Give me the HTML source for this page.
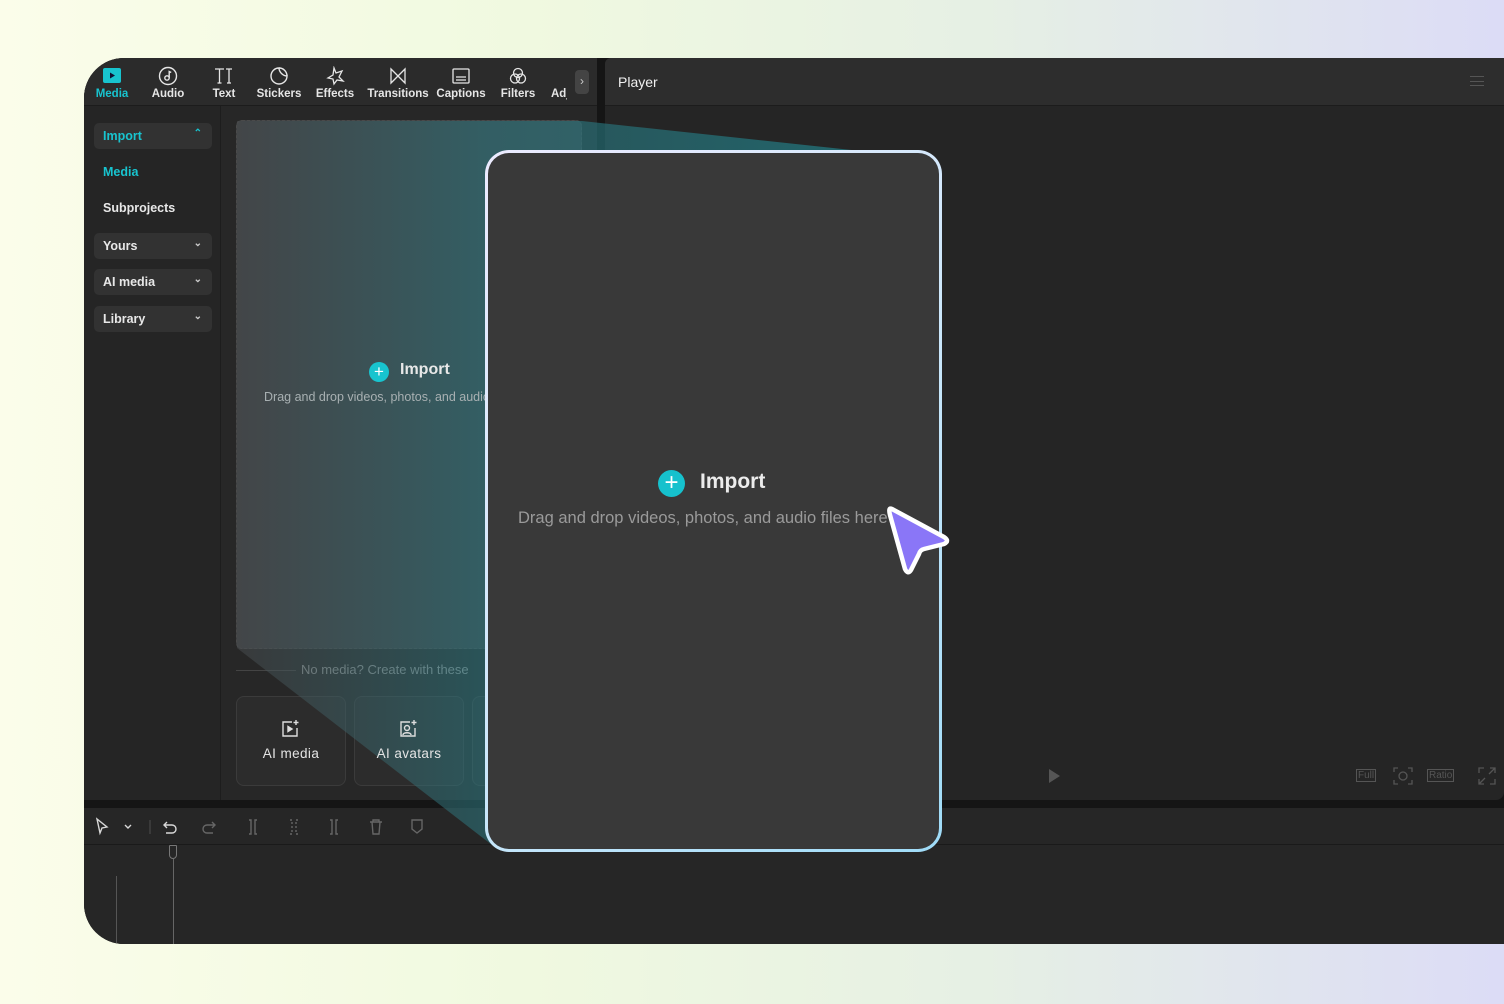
<!DOCTYPE html>
<html><head><style>
*{margin:0;padding:0;box-sizing:border-box}
body{width:1504px;height:1004px;overflow:hidden;position:relative;font-family:"Liberation Sans",sans-serif;background:linear-gradient(90deg,#fbfdea 0%,#f0f9e0 35%,#e6f0e4 65%,#dcdcf6 100%)}
.abs{position:absolute}
.app{left:84px;top:58px;width:1420px;height:886px;border-radius:40px 0 0 40px;overflow:hidden;background:#151515}
.tab{position:absolute;top:0;text-align:center;color:#e6e6e6;font-size:11.5px;font-weight:bold;width:56px}
.tab svg{display:block;margin:8px auto 2px;width:20px;height:20px}
.side{position:absolute;left:10px;width:118px;height:26px;border-radius:5px;background:#323232;color:#e8e8e8;font-size:12.5px;font-weight:bold;padding:6px 9px}
.side i{position:absolute;right:10px;top:5px;font-style:normal;font-size:10px;color:#ccc}
</style></head><body>
<div class="abs app">
  <div class="abs" style="left:0;top:0;width:513px;height:742px;background:#272727;border-radius:0 0 8px 8px"></div>
  <div class="abs" style="left:0;top:0;width:513px;height:48px;background:#2b2b2b;border-bottom:1px solid #1c1c1c"></div>
  <div class="abs" style="left:0;top:48px;width:137px;height:694px;background:#252525;border-right:1px solid #1d1d1d"></div>
  <div class="tab" style="left:0;color:#18c4cf"><svg viewBox="0 0 20 20"><rect x="1" y="2" width="18" height="15" rx="2" fill="#18c4cf"/><path d="M8 6.5l5 3-5 3z" fill="#113"/></svg>Media</div>
  <div class="tab" style="left:56px"><svg viewBox="0 0 20 20" fill="none" stroke="#e6e6e6" stroke-width="1.4"><circle cx="10" cy="10" r="8.5"/><circle cx="9" cy="12" r="2.2"/><path d="M11.2 12V5.5l2 1"/></svg>Audio</div>
  <div class="tab" style="left:112px"><svg viewBox="0 0 20 20" fill="none" stroke="#e6e6e6" stroke-width="1.3"><path d="M1 3h9M5.5 3v14M3.5 17h4M12 3h6M15 3v14M13 17h4"/></svg>Text</div>
  <div class="tab" style="left:167px"><svg viewBox="0 0 20 20" fill="none" stroke="#e6e6e6" stroke-width="1.4"><path d="M18 10A8 8 0 1 1 10 2c0 4 4 8 8 8z"/><path d="M10 2a8 8 0 0 1 8 8"/></svg>Stickers</div>
  <div class="tab" style="left:223px"><svg viewBox="0 0 20 20" fill="none" stroke="#e6e6e6" stroke-width="1.3"><path d="M9 2l2 5 6-2-3 6 4 4-6-1-3 4-1-5-5-1 5-3z"/></svg>Effects</div>
  <div class="tab" style="left:283px;width:62px"><svg viewBox="0 0 20 20" fill="none" stroke="#e6e6e6" stroke-width="1.3"><path d="M3 3v14l14-14v14z"/></svg>Transitions</div>
  <div class="tab" style="left:348px;width:58px"><svg viewBox="0 0 20 20" fill="none" stroke="#e6e6e6" stroke-width="1.3"><rect x="2" y="3" width="16" height="14" rx="1"/><path d="M5 11h10M5 14h10"/></svg>Captions</div>
  <div class="tab" style="left:406px"><svg viewBox="0 0 20 20" fill="none" stroke="#e6e6e6" stroke-width="1.3"><circle cx="10" cy="7" r="4.5"/><circle cx="7" cy="12.5" r="4.5"/><circle cx="13" cy="12.5" r="4.5"/></svg>Filters</div>
  <div class="tab" style="left:467px;width:16px;overflow:hidden;text-align:left"><svg viewBox="0 0 20 20"></svg>Adj</div>
  <div class="abs" style="left:491px;top:12px;width:14px;height:24px;border-radius:4px;background:#444;color:#ccc;font-size:12px;text-align:center;line-height:23px">›</div>
  <div class="side" style="top:65px;color:#18c4cf">Import<i style="color:#18c4cf">⌃</i></div>
  <div class="abs" style="left:19px;top:107px;color:#18c4cf;font-size:12.5px;font-weight:bold">Media</div>
  <div class="abs" style="left:19px;top:143px;color:#e8e8e8;font-size:12.5px;font-weight:bold">Subprojects</div>
  <div class="side" style="top:175px">Yours<i>⌄</i></div>
  <div class="side" style="top:211px">AI media<i>⌄</i></div>
  <div class="side" style="top:248px">Library<i>⌄</i></div>
  <div class="abs" style="left:152px;top:62px;width:346px;height:529px;border:1px dashed #4a4a4a;border-radius:6px;background:#3c3e40"></div>
  <div class="abs" style="left:152px;top:612px;width:60px;height:1px;background:#444"></div>
  <div class="abs" style="left:217px;top:604px;color:#9a9a9a;font-size:13px">No media? Create with these</div>
  <div class="abs" style="left:152px;top:638px;width:110px;height:90px;border:1px solid #3b3b3b;border-radius:8px;background:#2c2c2c"></div>
  <div class="abs" style="left:270px;top:638px;width:110px;height:90px;border:1px solid #3b3b3b;border-radius:8px;background:#2c2c2c"></div>
  <div class="abs" style="left:388px;top:638px;width:30px;height:90px;border:1px solid #3b3b3b;border-radius:8px;background:#2c2c2c"></div>
  <div class="abs" style="left:521px;top:0;width:899px;height:742px;background:#252525;border-radius:6px 0 8px 8px"></div>
  <div class="abs" style="left:521px;top:0;width:899px;height:48px;background:#2d2d2d;border-bottom:1px solid #1c1c1c;border-radius:6px 0 0 0"></div>
  <div class="abs" style="left:534px;top:16px;color:#f0f0f0;font-size:14px">Player</div>
  <div class="abs" style="left:1386px;top:18px;width:14px;height:10px;border-top:1px solid #555;border-bottom:1px solid #555"></div>
  <div class="abs" style="left:1386px;top:23px;width:14px;height:1px;background:#555"></div>
  <svg class="abs" style="left:963px;top:710px" width="14" height="16"><path d="M2 1l11 7-11 7z" fill="#555"/></svg>
  <div class="abs" style="left:1272px;top:711px;border:1px solid #555;color:#555;font-size:10px;padding:0 1px">Full</div>
  <div class="abs" style="left:1343px;top:711px;border:1px solid #555;color:#555;font-size:10px;padding:0 1px">Ratio</div>
  <svg class="abs" style="left:1309px;top:709px" width="20" height="18" fill="none" stroke="#555" stroke-width="1.3"><path d="M1 5V1h4M15 1h4v4M19 13v4h-4M5 17H1v-4"/><circle cx="10" cy="9" r="4"/></svg>
  <svg class="abs" style="left:1394px;top:709px" width="18" height="18" fill="none" stroke="#555" stroke-width="1.3"><path d="M1 6V1h5M12 1h5v5M17 12v5h-5M6 17H1v-5M1 17l6-6M17 1l-6 6"/></svg>
  <div class="abs" style="left:0;top:750px;width:1420px;height:136px;background:#262626"></div>
  <div class="abs" style="left:0;top:786px;width:1420px;height:1px;background:#1a1a1a"></div>
  <svg class="abs" style="left:10px;top:759px" width="340" height="20" fill="none" stroke="#d8d8d8" stroke-width="1.4">
    <path d="M3 2l3 14 2-5 5-1z"/><path d="M31 8l3 3 3-3"/>
    <path d="M56 3v14" stroke="#444"/>
    <path d="M73 5l-3 3 3 3M70 8h8a4 4 0 0 1 0 8h-6"/>
    <g stroke="#666"><path d="M118 5l3 3-3 3M121 8h-8a4 4 0 0 0 0 8h6"/>
    <path d="M155 3h2v14h-2M163 3h-2v14h2"/>
    <path d="M196 3h2v14h-2M204 3h-2v14h2" stroke-dasharray="2 2"/>
    <path d="M236 3h2v14h-2M244 3h-2v14h2"/>
    <path d="M276 5h12M279 5V3h6v2M278 5l1 12h6l1-12"/>
    <path d="M318 3h10v9l-5 4-5-4z"/></g>
  </svg>
  <div class="abs" style="left:85px;top:787px;width:8px;height:14px;border:1.4px solid #777;border-radius:1px 1px 4px 4px"></div>
  <div class="abs" style="left:89px;top:801px;width:1px;height:85px;background:#666"></div>
  <div class="abs" style="left:32px;top:818px;width:1px;height:68px;background:#555"></div>
</div>

<svg class="abs" style="left:0;top:0" width="1504" height="1004">
  <defs>
    <linearGradient id="tg" x1="236" y1="0" x2="940" y2="0" gradientUnits="userSpaceOnUse">
      <stop offset="0" stop-color="#4a4d50" stop-opacity=".5"/>
      <stop offset=".35" stop-color="#2c7880" stop-opacity=".55"/>
      <stop offset="1" stop-color="#1e7f88" stop-opacity=".75"/>
    </linearGradient>
  </defs>
  <polygon points="237,121 582,121 870,152 900,160 900,845 492,845 237,648" fill="url(#tg)"/>
</svg>
<svg class="abs" style="left:280px;top:719px" width="20" height="20" viewBox="0 0 20 20" fill="none" stroke="#ddd" stroke-width="1.4"><path d="M12 3H3v14h14V9"/><path d="M8 7.5l4 2.5-4 2.5z" fill="#ddd"/><path d="M16 1v5M13.5 3.5h5"/></svg>
<div class="abs" style="left:236px;top:746px;width:110px;text-align:center;color:#e4e4e4;font-size:13.5px;letter-spacing:.4px">AI media</div>
<svg class="abs" style="left:398px;top:719px" width="20" height="20" viewBox="0 0 20 20" fill="none" stroke="#ddd" stroke-width="1.4"><path d="M12 3H3v14h14V9"/><circle cx="9" cy="9" r="2.5"/><path d="M5 16c0-3 8-3 8 0"/><path d="M16 1v5M13.5 3.5h5"/></svg>
<div class="abs" style="left:354px;top:746px;width:110px;text-align:center;color:#e4e4e4;font-size:13.5px;letter-spacing:.4px">AI avatars</div>
<div class="abs" style="left:264px;top:390px;width:222px;overflow:hidden;white-space:nowrap;color:#a8b0b2;font-size:12.5px">Drag and drop videos, photos, and audio</div>
<div class="abs" style="left:369px;top:362px;width:20px;height:20px;border-radius:50%;background:#18c4cf;color:#fff;text-align:center;line-height:19px;font-size:17px">+</div>
<div class="abs" style="left:400px;top:361px;color:#e8e8e8;font-size:16px;font-weight:bold">Import</div>

<div class="abs" style="left:485px;top:150px;width:457px;height:702px;border-radius:24px;padding:3px;background:linear-gradient(135deg,#ecebff,#cfe8fb 50%,#9fdcf8)">
  <div style="width:100%;height:100%;border-radius:21px;background:#393939"></div>
</div>
<div class="abs" style="left:658px;top:470px;width:27px;height:27px;border-radius:50%;background:#16c1cd;color:#fff;text-align:center;line-height:26px;font-size:24px">+</div>
<div class="abs" style="left:700px;top:470px;color:#ececec;font-size:21px;font-weight:bold">Import</div>
<div class="abs" style="left:518px;top:509px;width:372px;overflow:hidden;white-space:nowrap;color:#9a9a9a;font-size:16.5px">Drag and drop videos, photos, and audio files here</div>
<svg class="abs" style="left:880px;top:495px" width="80" height="90" viewBox="0 0 80 90">
  <path d="M12 14 L64 42 Q70 46 64 49 L44 54 Q40 55 39 59 L31 75 Q28 80 25 74 L10 20 Q8 12 12 14Z" fill="#8a76f7" stroke="#fff" stroke-width="4.5" stroke-linejoin="round"/>
</svg>
</body></html>
